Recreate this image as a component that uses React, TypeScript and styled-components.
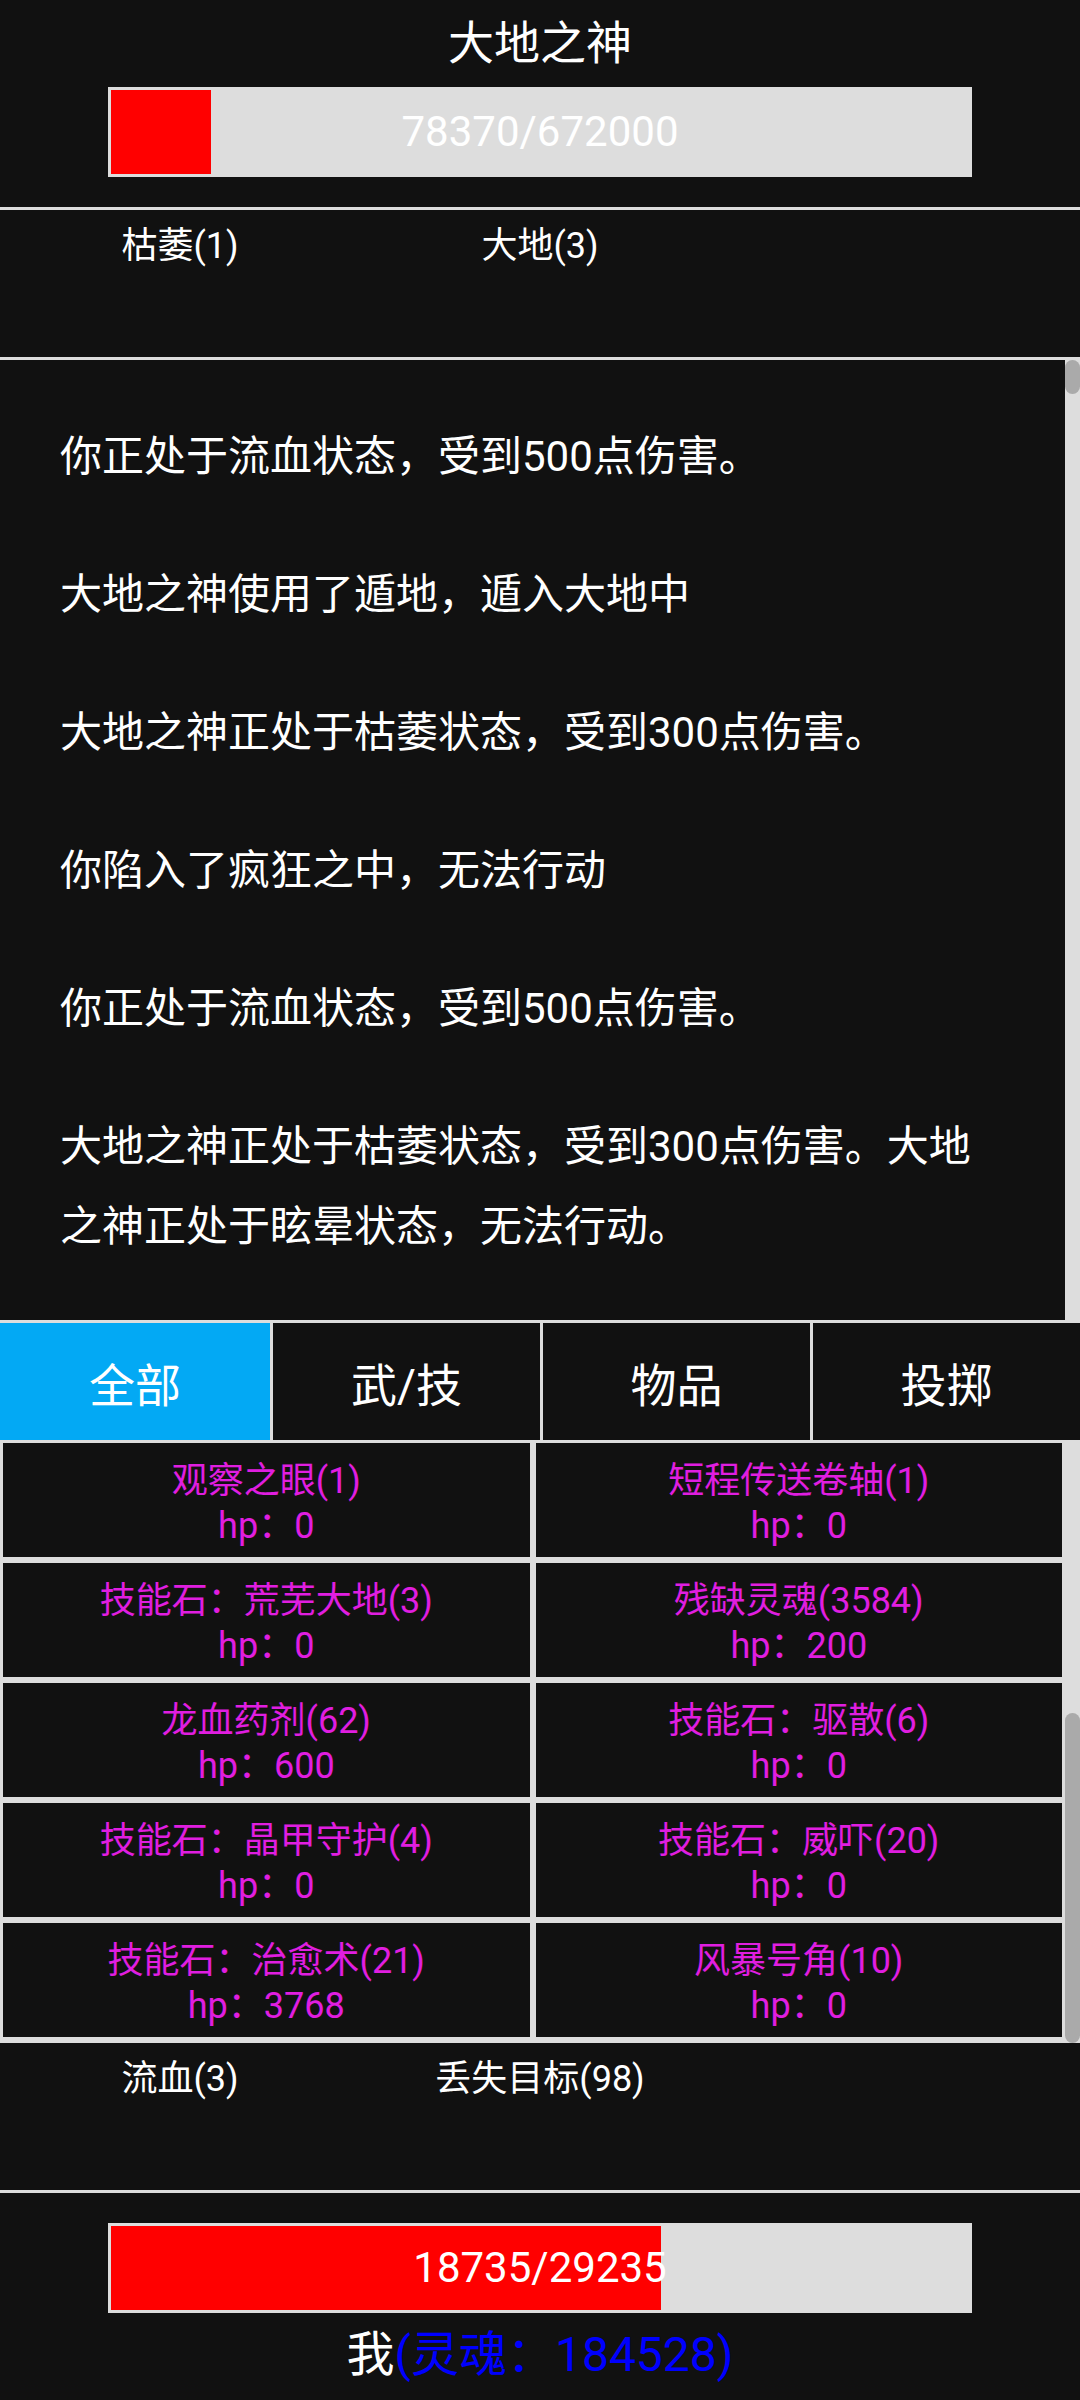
import * as React from 'react';
import styled, { createGlobalStyle } from 'styled-components';

const GlobalStyle = createGlobalStyle`
	html, body {
		margin: 0;
		padding: 0;
		background: #111;
	}
	body {
		font-family: Roboto, "Noto Sans CJK SC", sans-serif;
		color: #fff;
	}
`;

const Page = styled.div`
	width: 1080px;
	height: 2400px;
	background: #111;
	display: flex;
	flex-direction: column;
	overflow: hidden;
`;

const Header = styled.div`
	padding-bottom: 30px;
`;

const Title = styled.div`
	height: 87px;
	line-height: 87px;
	text-align: center;
	font-size: 46px;
`;

const HpBar = styled.div`
	display: grid;
	width: 864px;
	height: 90px;
	margin: 0 auto;
	box-sizing: border-box;
	border: 3px solid #ddd;
	background: #ddd;

	& > * {
		grid-area: 1 / 1;
	}
`;

const HpFill = styled.div`
	height: 100%;
	background: #f00;
`;

const HpText = styled.div`
	align-self: center;
	justify-self: center;
	font-size: 42px;
	line-height: 1;
	color: #fff;
`;

const Divider = styled.div`
	flex-shrink: 0;
	height: 3px;
	background: #ddd;
`;

const StatusRow = styled.div`
	display: grid;
	grid-template-columns: repeat(3, 1fr);
	align-content: start;
	flex-shrink: 0;
	height: 147px;
	box-sizing: border-box;
	padding-top: 12px;
	font-size: 36px;
	line-height: 48px;
	text-align: center;
`;

// scroll panes: content + a 15px track on the right
const ScrollPane = styled.div<{ $height: number; $bg?: string }>`
	display: flex;
	flex-shrink: 0;
	height: ${p => p.$height}px;
	overflow: hidden;
	background: ${p => p.$bg || '#111'};
`;

const Track = styled.div<{ $end?: boolean }>`
	display: flex;
	flex-direction: column;
	justify-content: ${p => (p.$end ? 'flex-end' : 'flex-start')};
	flex-shrink: 0;
	width: 15px;
	background: #ddd;
`;

const Thumb = styled.div<{ $size: number }>`
	height: ${p => p.$size}px;
	border-radius: 8px;
	background: #aaa;
`;

const Log = styled.div`
	flex: 1;
	overflow: hidden;
	padding: 28px 60px;
`;

const LogEntry = styled.p`
	margin: 0;
	padding: 29px 0;
	font-size: 42px;
	line-height: 80px;
`;

const Tabs = styled.div`
	display: grid;
	grid-template-columns: repeat(4, 1fr);
	flex-shrink: 0;
	height: 117px;
`;

const Tab = styled.div<{ $active?: boolean }>`
	display: flex;
	align-items: center;
	justify-content: center;
	font-size: 46px;
	background: ${p => (p.$active ? '#03a9f4' : '#111')};

	& + & {
		border-left: 3px solid #ddd;
	}
`;

const ItemGrid = styled.div`
	flex: 1;
	display: grid;
	grid-template-columns: 1fr 1fr;
	grid-auto-rows: 114px;
	gap: 6px;
	padding: 3px 3px 6px;
`;

const ItemCell = styled.div`
	display: flex;
	flex-direction: column;
	align-items: center;
	justify-content: center;
	box-sizing: border-box;
	padding-top: 7px;
	background: #111;
	color: #e01ee0;
	font-size: 36px;
	line-height: 45px;
`;

const Player = styled.div`
	padding-top: 30px;
`;

const PlayerName = styled.div`
	text-align: center;
	font-size: 48px;
	line-height: 84px;
`;

const Soul = styled.span`
	color: #0000ff;
`;

const log = [
	'你正处于流血状态，受到500点伤害。',
	'大地之神使用了遁地，遁入大地中',
	'大地之神正处于枯萎状态，受到300点伤害。',
	'你陷入了疯狂之中，无法行动',
	'你正处于流血状态，受到500点伤害。',
	'大地之神正处于枯萎状态，受到300点伤害。大地之神正处于眩晕状态，无法行动。'
];

const items = [
	{ name: '观察之眼(1)', hp: 0 },
	{ name: '短程传送卷轴(1)', hp: 0 },
	{ name: '技能石：荒芜大地(3)', hp: 0 },
	{ name: '残缺灵魂(3584)', hp: 200 },
	{ name: '龙血药剂(62)', hp: 600 },
	{ name: '技能石：驱散(6)', hp: 0 },
	{ name: '技能石：晶甲守护(4)', hp: 0 },
	{ name: '技能石：威吓(20)', hp: 0 },
	{ name: '技能石：治愈术(21)', hp: 3768 },
	{ name: '风暴号角(10)', hp: 0 }
];

const tabs = ['全部', '武/技', '物品', '投掷'];

const Bar = ({ value, max }: { value: number; max: number }) => (
	<HpBar>
		<HpFill style={{ width: `${(value / max) * 100}%` }} />
		<HpText>
			{value}/{max}
		</HpText>
	</HpBar>
);

export default function App() {
	return (
		<Page>
			<GlobalStyle />
			<Header>
				<Title>大地之神</Title>
				<Bar value={78370} max={672000} />
			</Header>
			<Divider />
			<StatusRow>
				<div>枯萎(1)</div>
				<div>大地(3)</div>
			</StatusRow>
			<Divider />
			<ScrollPane $height={960}>
				<Log>
					{log.map((line, i) => (
						<LogEntry key={i}>{line}</LogEntry>
					))}
				</Log>
				<Track>
					<Thumb $size={34} />
				</Track>
			</ScrollPane>
			<Divider />
			<Tabs>
				{tabs.map((t, i) => (
					<Tab key={t} $active={i === 0}>
						{t}
					</Tab>
				))}
			</Tabs>
			<ScrollPane $height={603} $bg="#ddd">
				<ItemGrid>
					{items.map((it, i) => (
						<ItemCell key={i}>
							<div>{it.name}</div>
							<div>hp：{it.hp}</div>
						</ItemCell>
					))}
				</ItemGrid>
				<Track $end>
					<Thumb $size={330} />
				</Track>
			</ScrollPane>
			<StatusRow>
				<div>流血(3)</div>
				<div>丢失目标(98)</div>
			</StatusRow>
			<Divider />
			<Player>
				<Bar value={18735} max={29235} />
				<PlayerName>
					我<Soul>(灵魂：184528)</Soul>
				</PlayerName>
			</Player>
		</Page>
	);
}
